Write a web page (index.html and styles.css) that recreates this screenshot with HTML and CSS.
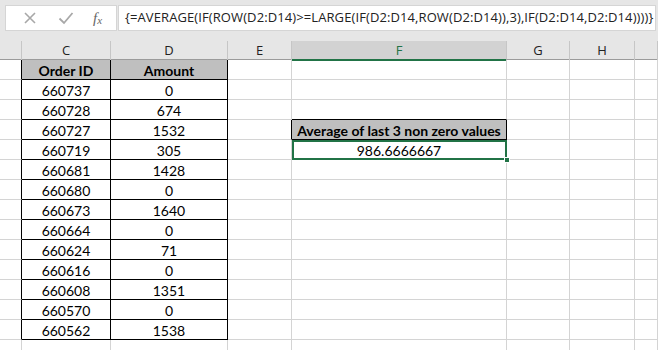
FILE: index.html
```html
<!DOCTYPE html>
<html>
<head>
<meta charset="utf-8">
<link rel="stylesheet" href="styles.css">
</head>
<body>
<div class="app">
  <div class="toolbar">
    <div class="btnbox">
      <svg class="ico" width="14" height="14" viewBox="0 0 14 14"><path d="M2 2 L12 12 M12 2 L2 12" stroke="#a8a8a8" stroke-width="1.6" fill="none"/></svg>
      <svg class="ico" width="16" height="14" viewBox="0 0 16 14"><path d="M1.5 7.5 L6 12 L14.5 2" stroke="#a8a8a8" stroke-width="1.8" fill="none"/></svg>
      <span class="fx">f<sub>x</sub></span>
    </div>
    <div class="formula">{=AVERAGE(IF(ROW(D2:D14)&gt;=LARGE(IF(D2:D14,ROW(D2:D14)),3),IF(D2:D14,D2:D14))))}</div>
  </div>
  <div class="colheads">
    <div class="ch"></div>
    <div class="ch">C</div>
    <div class="ch">D</div>
    <div class="ch">E</div>
    <div class="ch active">F</div>
    <div class="ch">G</div>
    <div class="ch">H</div>
    <div class="ch"></div>
  </div>
  <div class="sheet">
    <div class="c tl"></div><div class="c t th">Order ID</div><div class="c t th">Amount</div><div class="c"></div><div class="c"></div><div class="c"></div><div class="c"></div><div class="c"></div>
    <div class="c tl"></div><div class="c t">660737</div><div class="c t">0</div><div class="c"></div><div class="c"></div><div class="c"></div><div class="c"></div><div class="c"></div>
    <div class="c tl"></div><div class="c t">660728</div><div class="c t">674</div><div class="c"></div><div class="c ab"></div><div class="c"></div><div class="c"></div><div class="c"></div>
    <div class="c tl"></div><div class="c t">660727</div><div class="c t">1532</div><div class="c tl"></div><div class="c t th">Average of last 3 non zero values</div><div class="c"></div><div class="c"></div><div class="c"></div>
    <div class="c tl"></div><div class="c t">660719</div><div class="c t">305</div><div class="c"></div><div class="c sel">986.6666667<span class="handle"></span></div><div class="c"></div><div class="c"></div><div class="c"></div>
    <div class="c tl"></div><div class="c t">660681</div><div class="c t">1428</div><div class="c"></div><div class="c"></div><div class="c"></div><div class="c"></div><div class="c"></div>
    <div class="c tl"></div><div class="c t">660680</div><div class="c t">0</div><div class="c"></div><div class="c"></div><div class="c"></div><div class="c"></div><div class="c"></div>
    <div class="c tl"></div><div class="c t">660673</div><div class="c t">1640</div><div class="c"></div><div class="c"></div><div class="c"></div><div class="c"></div><div class="c"></div>
    <div class="c tl"></div><div class="c t">660664</div><div class="c t">0</div><div class="c"></div><div class="c"></div><div class="c"></div><div class="c"></div><div class="c"></div>
    <div class="c tl"></div><div class="c t">660624</div><div class="c t">71</div><div class="c"></div><div class="c"></div><div class="c"></div><div class="c"></div><div class="c"></div>
    <div class="c tl"></div><div class="c t">660616</div><div class="c t">0</div><div class="c"></div><div class="c"></div><div class="c"></div><div class="c"></div><div class="c"></div>
    <div class="c tl"></div><div class="c t">660608</div><div class="c t">1351</div><div class="c"></div><div class="c"></div><div class="c"></div><div class="c"></div><div class="c"></div>
    <div class="c tl"></div><div class="c t">660570</div><div class="c t">0</div><div class="c"></div><div class="c"></div><div class="c"></div><div class="c"></div><div class="c"></div>
    <div class="c tl"></div><div class="c t">660562</div><div class="c t">1538</div><div class="c"></div><div class="c"></div><div class="c"></div><div class="c"></div><div class="c"></div>
    <div class="c"></div><div class="c"></div><div class="c"></div><div class="c"></div><div class="c"></div><div class="c"></div><div class="c"></div><div class="c"></div>
  </div>
</div>
</body>
</html>
```
FILE: styles.css
```css
* { box-sizing: border-box; }
html, body { margin: 0; padding: 0; background: #fff; }
body { width: 658px; height: 350px; overflow: hidden; }
.app { width: 658px; height: 350px; overflow: hidden; display: flex; flex-direction: column; }
.app > * { flex-shrink: 0; }

.toolbar {
  height: 41px;
  background: #e6e6e6;
  display: flex;
  padding: 5px 2px 0 5px;
  align-items: flex-start;
}
.btnbox {
  width: 112px;
  height: 26px;
  background: #fff;
  border: 1px solid #d5d5d5;
  display: flex;
  align-items: center;
  padding-left: 17px;
}
.btnbox .ico:first-child { margin-right: 21px; }
.btnbox .ico:nth-child(2) { margin-right: 19px; }
.fx {
  font-family: "Liberation Serif", serif;
  font-style: italic;
  font-size: 15px;
  color: #666;
  line-height: 1;
}
.fx sub { font-size: 11px; vertical-align: -1px; }
.formula {
  margin-left: 1px;
  flex: 1;
  min-width: 0;
  height: 26px;
  background: #fff;
  border: 1px solid #d5d5d5;
  font-family: "Open Sans", sans-serif;
  font-size: 13px;
  letter-spacing: 0.1px;
  line-height: 23px;
  color: #222;
  padding-left: 6px;
  white-space: nowrap;
  overflow: hidden;
}

.colheads {
  height: 19px;
  background: #e6e6e6;
  display: grid;
  grid-template-columns: 22px 89px 117px 64px 215px 63px 65px 23px;
  border-bottom: 1px solid #9b9b9b;
}
.ch {
  border-right: 1px solid #c6c6c6;
  font-family: "Open Sans", sans-serif;
  font-size: 13px;
  line-height: 18px;
  text-align: center;
  color: #222;
}
.ch.active { background: #d2d2d2; border-bottom: 2px solid #217346; color: #217346; }

.sheet {
  display: grid;
  grid-template-columns: 22px 89px 117px 64px 215px 63px 65px 23px;
  grid-auto-rows: 20px;
  font-family: "Lato", sans-serif;
  font-size: 14px;
  color: #000;
}
.c {
  border-right: 1px solid #d4d4d4;
  border-bottom: 1px solid #d4d4d4;
  text-align: center;
  line-height: 21px;
  white-space: nowrap;
  position: relative;
}
.c.tl { border-right-color: #000; }
.c.t { border-right-color: #000; border-bottom-color: #000; }
.c.ab { border-bottom-color: #000; }
.th { background: #bfbfbf; font-weight: bold; }
.sel { outline: 2px solid #217346; outline-offset: -2px; z-index: 2; }
.handle {
  position: absolute;
  right: -4px;
  bottom: -4px;
  width: 6px;
  height: 6px;
  background: #217346;
  border: 1px solid #fff;
}
```
